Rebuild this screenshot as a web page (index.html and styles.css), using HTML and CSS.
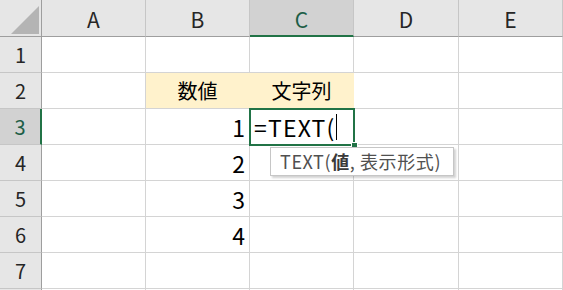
FILE: index.html
```html
<!DOCTYPE html>
<html lang="ja">
<head>
<meta charset="utf-8">
<title>TEXT</title>
<link rel="stylesheet" href="styles.css">
</head>
<body>
<div class="sheet">
  <div class="grid">
    <div class="corner"><span class="tri"></span></div>
    <div class="colh">A</div>
    <div class="colh">B</div>
    <div class="colh sel">C</div>
    <div class="colh">D</div>
    <div class="colh">E</div>

    <div class="rowh">1</div><div class="cell"></div><div class="cell"></div><div class="cell"></div><div class="cell"></div><div class="cell"></div>
    <div class="rowh">2</div><div class="cell"></div><div class="cell hl ctr">数値</div><div class="cell hl ctr">文字列</div><div class="cell"></div><div class="cell"></div>
    <div class="rowh sel">3</div><div class="cell"></div><div class="cell num">1</div><div class="cell edit">=TEXT(<span class="caret"></span></div><div class="cell"></div><div class="cell"></div>
    <div class="rowh">4</div><div class="cell"></div><div class="cell num">2</div><div class="cell"></div><div class="cell"></div><div class="cell"></div>
    <div class="rowh">5</div><div class="cell"></div><div class="cell num">3</div><div class="cell"></div><div class="cell"></div><div class="cell"></div>
    <div class="rowh">6</div><div class="cell"></div><div class="cell num">4</div><div class="cell"></div><div class="cell"></div><div class="cell"></div>
    <div class="rowh">7</div><div class="cell"></div><div class="cell"></div><div class="cell"></div><div class="cell"></div><div class="cell"></div>
    <div class="rowh"></div><div class="cell"></div><div class="cell"></div><div class="cell"></div><div class="cell"></div><div class="cell"></div>
  </div>
  <div class="selbox"><span class="handle"></span></div>
  <div class="tip">TEXT(<b>値</b>, 表示形式)</div>
</div>
</body>
</html>
```

FILE: styles.css
```css
html, body {
  margin: 0;
  padding: 0;
  background: #ffffff;
  overflow: hidden;
}
.sheet {
  position: relative;
  width: 563px;
  height: 290px;
  overflow: hidden;
  font-family: "Noto Sans CJK JP", "Noto Sans", sans-serif;
}
.grid {
  display: grid;
  grid-template-columns: 42px 104px 104px 104px 105px 104px;
  grid-template-rows: 37px repeat(8, 36px);
}
.grid > div {
  box-sizing: border-box;
  display: flex;
  align-items: center;
  color: #000;
}
.corner {
  background: #e6e6e6;
  border-right: 1px solid #9e9e9e;
  border-bottom: 1px solid #9e9e9e;
  position: relative;
}
.tri {
  position: absolute;
  left: 11px;
  top: 6px;
  width: 28px;
  height: 28px;
  background: #b4b4b4;
  clip-path: polygon(100% 0, 100% 100%, 0 100%);
}
.colh {
  background: #e6e6e6;
  border-right: 1px solid #c6c6c6;
  border-bottom: 1px solid #9e9e9e;
  justify-content: center;
  font-size: 21px;
  color: #262626 !important;
  padding-top: 2px;
}
.colh.sel {
  background: #d2d2d2;
  border-bottom: 2px solid #217346;
  color: #1d5e47 !important;
  padding-top: 3px;
}
.rowh {
  background: #e6e6e6;
  border-right: 1px solid #9e9e9e;
  border-bottom: 1px solid #c6c6c6;
  justify-content: center;
  font-size: 20px;
  color: #262626 !important;
}
.rowh.sel {
  background: #d2d2d2;
  border-right: 2px solid #217346;
  color: #1d5e47 !important;
}
.cell {
  border-right: 1px solid #d4d4d4;
  border-bottom: 1px solid #d4d4d4;
  font-size: 21px;
}
.hl {
  background: #fff2cc;
  border-right-color: #fff2cc;
}
.ctr {
  justify-content: center;
  font-size: 20px;
}
.num {
  justify-content: flex-end;
  padding-right: 4px;
  font-size: 23px;
}
.edit {
  padding-left: 4px;
  font-size: 23px;
  letter-spacing: 1.2px;
}
.caret {
  display: inline-block;
  width: 1px;
  height: 26px;
  background: #000;
  margin-left: 0;
}
.selbox {
  position: absolute;
  left: 249px;
  top: 108px;
  width: 106px;
  height: 38px;
  box-sizing: border-box;
  border: 2px solid #217346;
}
.handle {
  position: absolute;
  right: -5px;
  bottom: -5px;
  width: 5px;
  height: 5px;
  background: #217346;
  border: 1px solid #fff;
}
.tip {
  position: absolute;
  left: 270px;
  top: 147px;
  width: 184px;
  height: 29px;
  box-sizing: border-box;
  background: #fff;
  border: 1px solid #c6c6c6;
  box-shadow: 2px 2px 2px rgba(0,0,0,0.18);
  padding-left: 9px;
  font-size: 18px;
  letter-spacing: 0.6px;
  line-height: 27px;
  color: #505050;
  white-space: nowrap;
}
.tip b {
  font-weight: bold;
  color: #3a3a3a;
}
```
